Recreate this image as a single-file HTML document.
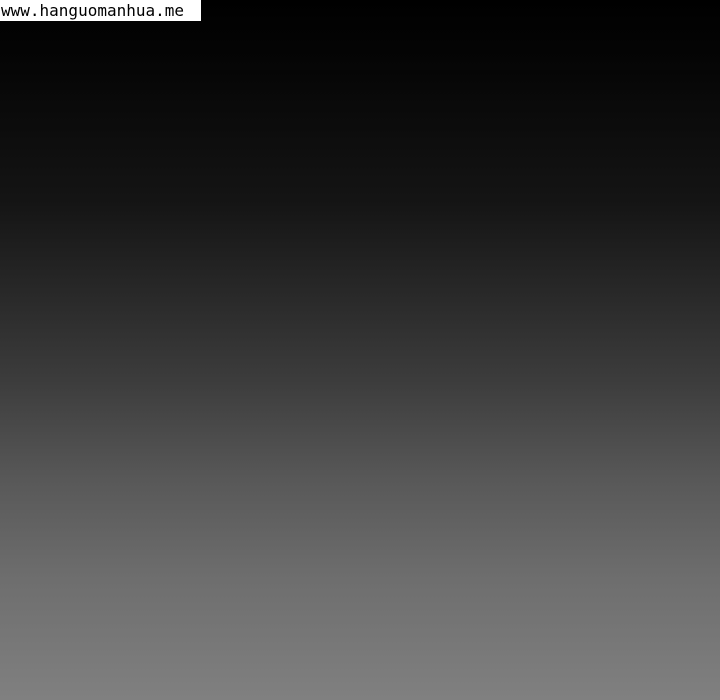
<!DOCTYPE html>
<html><head><style>
html,body{margin:0;padding:0;}
body{width:720px;height:700px;overflow:hidden;background:linear-gradient(to bottom,#000 0px,#050505 60px,#141414 200px,#2a2a2a 300px,#3c3c3c 380px,#585858 480px,#6e6e6e 580px,#808080 700px);position:relative;}
.lbl{position:absolute;left:0;top:0;width:201px;height:21px;background:#fff;color:#000;font-family:"DejaVu Sans Mono","Liberation Mono",monospace;font-size:16px;line-height:21px;padding-left:1px;box-sizing:border-box;white-space:nowrap;}
</style></head><body>
<div class="lbl">www.hanguomanhua.me</div>
</body></html>
